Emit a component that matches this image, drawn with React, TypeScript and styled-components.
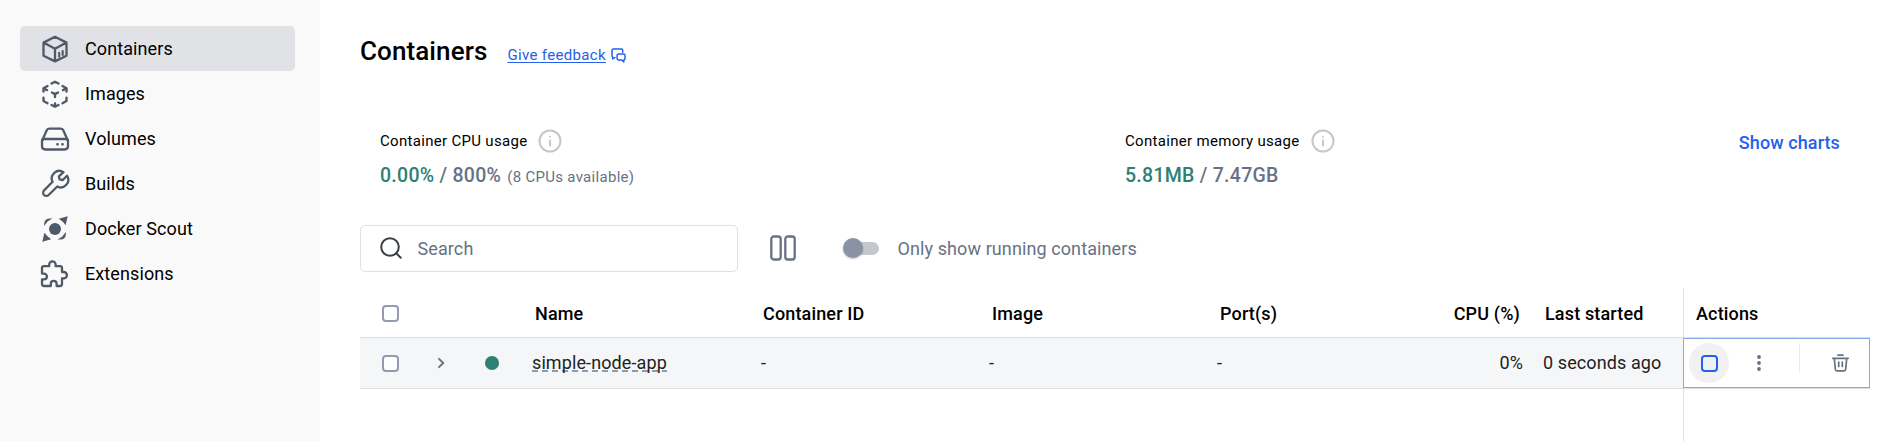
import React from "react";
import styled, { createGlobalStyle, css } from "styled-components";

const GlobalStyle = createGlobalStyle`
  *, *::before, *::after { box-sizing: border-box; }
  body {
    margin: 0;
    background: #fff;
    color: #000;
    font-family: Roboto, "Liberation Sans", sans-serif;
    font-size: 18px;
    letter-spacing: 0.1px;
  }
  button, input { font: inherit; letter-spacing: inherit; }
`;

const Shell = styled.div`
  display: flex;
  height: 441px;
  overflow: hidden;
`;

const Sidebar = styled.nav`
  flex: none;
  width: 320px;
  padding: 26px 25px 0 20px;
  background: #f9f9fa;
`;

const NavItem = styled.a<{ $active?: boolean }>`
  display: flex;
  align-items: center;
  gap: 15px;
  height: 45px;
  padding-left: 20px;
  border-radius: 5px;
  background: ${(p) => (p.$active ? "#e1e2e6" : "transparent")};
  color: #000;
  svg { flex: none; color: #505968; }
`;

const Main = styled.main`
  flex: 1;
  display: flex;
  flex-direction: column;
  padding: 34px 32px 0 40px;
`;

const TitleRow = styled.header`
  display: flex;
  align-items: baseline;
  gap: 20px;
  height: 34px;
`;

const Title = styled.h1`
  margin: 0;
  font-size: 26px;
  line-height: 34px;
  font-weight: 500;
  letter-spacing: 0.1px;
`;

const Feedback = styled.a`
  display: flex;
  align-items: center;
  gap: 5px;
  font-size: 15px;
  line-height: 20px;
  letter-spacing: 0.33px;
  color: #2560ea;
  span { text-decoration: underline; text-underline-offset: 2px; }
`;

const Stats = styled.section`
  display: flex;
  margin-top: 57px;
  padding: 0 30px 0 20px;
  height: 99px;
`;

const Stat = styled.div<{ $width?: number }>`
  width: ${(p) => (p.$width ? `${p.$width}px` : "auto")};
`;

const StatLabel = styled.div`
  display: flex;
  align-items: center;
  gap: 11px;
  height: 32px;
  font-size: 15px;
  letter-spacing: 0.31px;
`;

const StatValue = styled.div`
  display: flex;
  align-items: baseline;
  gap: 6px;
  margin-top: 6px;
  line-height: 26px;
  font-size: 19.5px;
  font-weight: 500;
  letter-spacing: 0.27px;
  color: #677285;
  em { font-style: normal; color: #2e7f74; }
  small { font-size: 15px; font-weight: 400; letter-spacing: 0.3px; }
`;

const ChartsLink = styled.a`
  margin-left: auto;
  height: 32px;
  line-height: 36px;
  font-weight: 500;
  letter-spacing: 0.1px;
  white-space: nowrap;
  color: #2560ea;
`;

const Toolbar = styled.div`
  display: flex;
  align-items: center;
  height: 48px;
  color: #677285;
`;

const SearchBox = styled.label`
  display: flex;
  align-items: center;
  gap: 16px;
  width: 378px;
  height: 47px;
  padding-left: 18.5px;
  border: 1px solid #dfe0e2;
  border-radius: 5px;
  input {
    width: 300px;
    padding: 0;
    border: 0;
    outline: 0;
    background: none;
  }
  input::placeholder { color: #677285; opacity: 1; }
`;

const ColumnsButton = styled.span`
  display: flex;
  margin-left: 32px;
`;

const Switch = styled.span`
  display: flex;
  align-items: center;
  width: 34px;
  height: 13px;
  margin: 0 18.5px 0 49px;
  border-radius: 7px;
  background: #c4c8d1;
  &::before {
    content: "";
    flex: none;
    width: 20px;
    height: 20px;
    margin-left: -2px;
    border-radius: 50%;
    background: #8993a5;
    box-shadow: 0 1px 2px rgba(0, 0, 0, 0.25);
  }
`;

const Table = styled.div`
  width: 1510px;
  margin-top: 16px;
`;

const rowGrid = css`
  display: grid;
  grid-template-columns: 62px 58px 52px 229px 228px 228px 228px 78px 20px 140px 187px;
  align-items: center;
`;

const HeadRow = styled.div`
  ${rowGrid}
  height: 50px;
  border-bottom: 1px solid #dcdee1;
  font-weight: 500;
  letter-spacing: 0.15px;
`;

const BodyRow = styled.div`
  ${rowGrid}
  height: 51px;
  border-bottom: 1px solid #dcdee1;
  background: #f5f6f8;
  color: #222;
`;

const FillRow = styled.div`
  ${rowGrid}
  height: 52px;
`;

const Cell = styled.div<{ $pad?: number; $right?: number }>`
  display: flex;
  align-items: center;
  justify-content: ${(p) => (p.$right === undefined ? "flex-start" : "flex-end")};
  padding-left: ${(p) => p.$pad ?? 0}px;
  padding-right: ${(p) => p.$right ?? 0}px;
  white-space: nowrap;
`;

const HeadCell = styled(Cell)`
  padding-top: 2px;
`;

const TextCell = styled(Cell)`
  padding-bottom: 1px;
`;

const PinnedCell = styled(Cell)`
  height: 100%;
  padding-top: 2px;
  border-left: 1px solid #dcdee1;
`;

const Checkbox = styled.span`
  width: 17px;
  height: 17px;
  border: 2px solid #929bb0;
  border-radius: 4px;
  background: #fff;
`;

const StatusDot = styled.span`
  width: 14px;
  height: 14px;
  border-radius: 50%;
  background: #2e7f74;
`;

const ContainerName = styled.span`
  line-height: 18px;
  background: repeating-linear-gradient(90deg, #8b9aae 0 6px, transparent 6px 10px) 0 100% / 100% 2px no-repeat;
`;

const ActionsCell = styled.div`
  display: flex;
  align-items: center;
  height: 50px;
  padding-left: 5px;
  border: 1px solid #86a9ea;
  background: #fff;
`;

const StopButton = styled.span`
  display: flex;
  align-items: center;
  justify-content: center;
  width: 40px;
  height: 40px;
  border-radius: 50%;
  background: #f1f1f2;
  &::before {
    content: "";
    width: 17px;
    height: 17px;
    border: 2px solid #2560ea;
    border-radius: 4px;
  }
`;

const Divider = styled.span`
  width: 1px;
  height: 30px;
  margin: -10px 32px 0 37px;
  background: #e9eaec;
`;

const stroke = { fill: "none", stroke: "currentColor", strokeLinejoin: "round", strokeLinecap: "round" } as const;

const ContainerIcon = () => (
  <svg width="30" height="30" viewBox="0 0 30 30" {...stroke} strokeWidth="2.3">
    <path d="M15 2.8 26.5 8.6v13.200L15 27.400 3.500 21.800V8.600Z M3.500 8.600 15 14.800 26.500 8.600 M15 14.800v12.600" />
    <path d="M19.200 18.800v4 M22.700 17v4" strokeWidth="2.100" />
  </svg>
);

const ImageIcon = () => (
  <svg width="30" height="30" viewBox="0 0 30 30" {...stroke} strokeWidth="2.400">
    <path d="M11.500 4.500 15 2.800l3.500 1.700 M22.500 7l4 2.200v3.300 M26.500 18.800V22l-4 2.200 M18.500 26 15 27.600 11.500 26 M7.500 24.200l-4-2.200v-3.200 M3.500 12.500V9.200L7.500 7" />
    <path d="M4 9.500l3 1.600 M26 9.500l-3 1.600 M15 27v-2.500 M12 13.500l3 1.600 3-1.600 M15 15.100v3" />
  </svg>
);

const VolumeIcon = () => (
  <svg width="30" height="30" viewBox="0 0 30 30" {...stroke} strokeWidth="2.300">
    <path d="M2.200 16.500 6.600 6.500Q7.300 4.700 9.200 4.700h11.600q1.900 0 2.600 1.800l4.400 10" />
    <path d="M4 15h22q2 0 2 2v5q0 3.500-3.500 3.500h-19Q2 25.500 2 22v-5q0-2 2-2Z" />
    <path d="M17.500 20.300h.02 M22.500 20.300h.02" strokeWidth="2.800" />
  </svg>
);

const BuildIcon = () => (
  <svg width="30" height="30" viewBox="0 0 30 30" {...stroke} strokeWidth="2.300">
    <path d="M23.500 3.200A7.500 7.500 0 0 0 12.600 12.800l-8.500 8.600a3.200 3.200 0 0 0 4.500 4.600l8.700-8.500A7.500 7.500 0 0 0 27 6.700l-4.400 4.400-3-.700-.7-3Z" />
  </svg>
);

const ScoutIcon = () => (
  <svg width="30" height="30" viewBox="0 0 30 30" fill="currentColor">
    <circle cx="15" cy="15" r="6" />
    <path d="M27.700 2.300 25.600 11.200Q22.800 7.200 18.800 4.800Z M2.300 27.700 4.400 18.800Q7.200 22.800 11.200 25.200Z" />
    <path d="M4.200 12V9.300Q4.800 4.600 9.300 4.400h3.200Q9.800 6 7.600 7.600 6 9.800 4.200 12Z M25.800 18v2.700Q25.200 25.400 20.700 25.600h-3.200Q20.200 24 22.400 22.400 24 20.200 25.800 18Z" />
  </svg>
);

const ExtensionIcon = () => (
  <svg width="30" height="30" viewBox="0 0 30 30" {...stroke} strokeWidth="2.300">
    <path d="M4 7.200h5.200V5.500a3.200 3.200 0 0 1 6.400 0v1.700H20q2 0 2 2v3.800h1.700a3.200 3.200 0 0 1 0 6.400H22V25q0 2-2 2h-3.400v-2.300a2.900 2.900 0 0 0-5.800 0V27H4q-2 0-2-2v-4.600h2a2.900 2.900 0 0 0 0-5.800H2V9.200q0-2 2-2Z" />
  </svg>
);

const InfoIcon = () => (
  <svg width="24" height="24" viewBox="0 0 24 24" {...stroke} stroke="#c6c7c9" strokeWidth="2">
    <circle cx="12" cy="12" r="10.500" />
    <path d="M12 11.500v5 M12 7.700v.02" />
  </svg>
);

const FeedbackIcon = () => (
  <svg width="15" height="15" viewBox="0 0 15 15" {...stroke} strokeWidth="1.500">
    <path d="M4 9.500 1.800 11V9.200Q1 8.800 1 8V2.500Q1 1 2.500 1h7.700q1.500 0 1.500 1.500v1.700" />
    <path d="M7.500 6h5q1.500 0 1.500 1.500v3q0 1.300-1.200 1.500V14L10.700 12H7.500q-1.400 0-1.400-1.400V7.500Q6.100 6 7.500 6Z" />
  </svg>
);

const SearchIcon = () => (
  <svg width="22" height="22" viewBox="0 0 22 22" {...stroke} stroke="#393f49" strokeWidth="2">
    <circle cx="10" cy="10" r="8.800" />
    <path d="M16.300 16.300 20.700 20.700" />
  </svg>
);

const ColumnsIcon = () => (
  <svg width="26" height="26" viewBox="0 0 26 26" {...stroke} strokeWidth="2.300">
    <rect x="1.300" y="1.500" width="9.400" height="23" rx="2.500" />
    <rect x="15.300" y="1.500" width="9.400" height="23" rx="2.500" />
  </svg>
);

const ChevronIcon = () => (
  <svg width="8" height="12" viewBox="0 0 8 12" {...stroke} stroke="#677285" strokeWidth="1.900">
    <path d="M2 1.800 6.200 6 2 10.200" />
  </svg>
);

const MoreIcon = () => (
  <svg width="6" height="18" viewBox="0 0 6 18" fill="#677285">
    <circle cx="3" cy="3" r="1.900" />
    <circle cx="3" cy="9" r="1.900" />
    <circle cx="3" cy="15" r="1.900" />
  </svg>
);

const TrashIcon = () => (
  <svg width="17" height="18" viewBox="0 0 17 18" {...stroke} stroke="#677285" strokeWidth="1.700">
    <path d="M.8 4.300h15.400 M6 1.200h5 M2.300 4.500l1 10.700q.2 1.600 1.700 1.600h7q1.500 0 1.700-1.600l1-10.700 M6.700 8v4.500 M10.300 8v4.500" />
  </svg>
);

const navigation = [
  { label: "Containers", Icon: ContainerIcon },
  { label: "Images", Icon: ImageIcon },
  { label: "Volumes", Icon: VolumeIcon },
  { label: "Builds", Icon: BuildIcon },
  { label: "Docker Scout", Icon: ScoutIcon },
  { label: "Extensions", Icon: ExtensionIcon },
];

const App: React.FC = () => (
  <>
    <GlobalStyle />
    <Shell>
      <Sidebar>
        {navigation.map(({ label, Icon }) => (
          <NavItem key={label} $active={label === "Containers"}>
            <Icon />
            {label}
          </NavItem>
        ))}
      </Sidebar>
      <Main>
        <TitleRow>
          <Title>Containers</Title>
          <Feedback>
            <span>Give feedback</span>
            <FeedbackIcon />
          </Feedback>
        </TitleRow>
        <Stats>
          <Stat $width={745}>
            <StatLabel>Container CPU usage <InfoIcon /></StatLabel>
            <StatValue>
              <span><em>0.00%</em> / 800%</span>
              <small>(8 CPUs available)</small>
            </StatValue>
          </Stat>
          <Stat>
            <StatLabel>Container memory usage <InfoIcon /></StatLabel>
            <StatValue>
              <span><em>5.81MB</em> / 7.47GB</span>
            </StatValue>
          </Stat>
          <ChartsLink>Show charts</ChartsLink>
        </Stats>
        <Toolbar>
          <SearchBox>
            <SearchIcon />
            <input placeholder="Search" />
          </SearchBox>
          <ColumnsButton><ColumnsIcon /></ColumnsButton>
          <Switch />
          <span>Only show running containers</span>
        </Toolbar>
        <Table>
          <HeadRow>
            <HeadCell $pad={22}><Checkbox /></HeadCell>
            <Cell />
            <Cell />
            <HeadCell $pad={3}>Name</HeadCell>
            <HeadCell $pad={2}>Container ID</HeadCell>
            <HeadCell $pad={3}>Image</HeadCell>
            <HeadCell $pad={3}>Port(s)</HeadCell>
            <HeadCell $right={3}>CPU (%)</HeadCell>
            <Cell />
            <HeadCell $pad={2}>Last started</HeadCell>
            <PinnedCell $pad={12}>Actions</PinnedCell>
          </HeadRow>
          <BodyRow>
            <Cell $pad={22}><Checkbox /></Cell>
            <Cell $pad={15}><ChevronIcon /></Cell>
            <Cell $pad={5}><StatusDot /></Cell>
            <Cell><ContainerName>simple-node-app</ContainerName></Cell>
            <TextCell>-</TextCell>
            <TextCell>-</TextCell>
            <TextCell>-</TextCell>
            <TextCell $right={0}>0%</TextCell>
            <Cell />
            <TextCell>0 seconds ago</TextCell>
            <ActionsCell>
              <StopButton />
              <Cell $pad={27}><MoreIcon /></Cell>
              <Divider />
              <TrashIcon />
            </ActionsCell>
          </BodyRow>
          <FillRow>
            <Cell /><Cell /><Cell /><Cell /><Cell /><Cell /><Cell /><Cell /><Cell /><Cell />
            <PinnedCell />
          </FillRow>
        </Table>
      </Main>
    </Shell>
  </>
);

export default App;
